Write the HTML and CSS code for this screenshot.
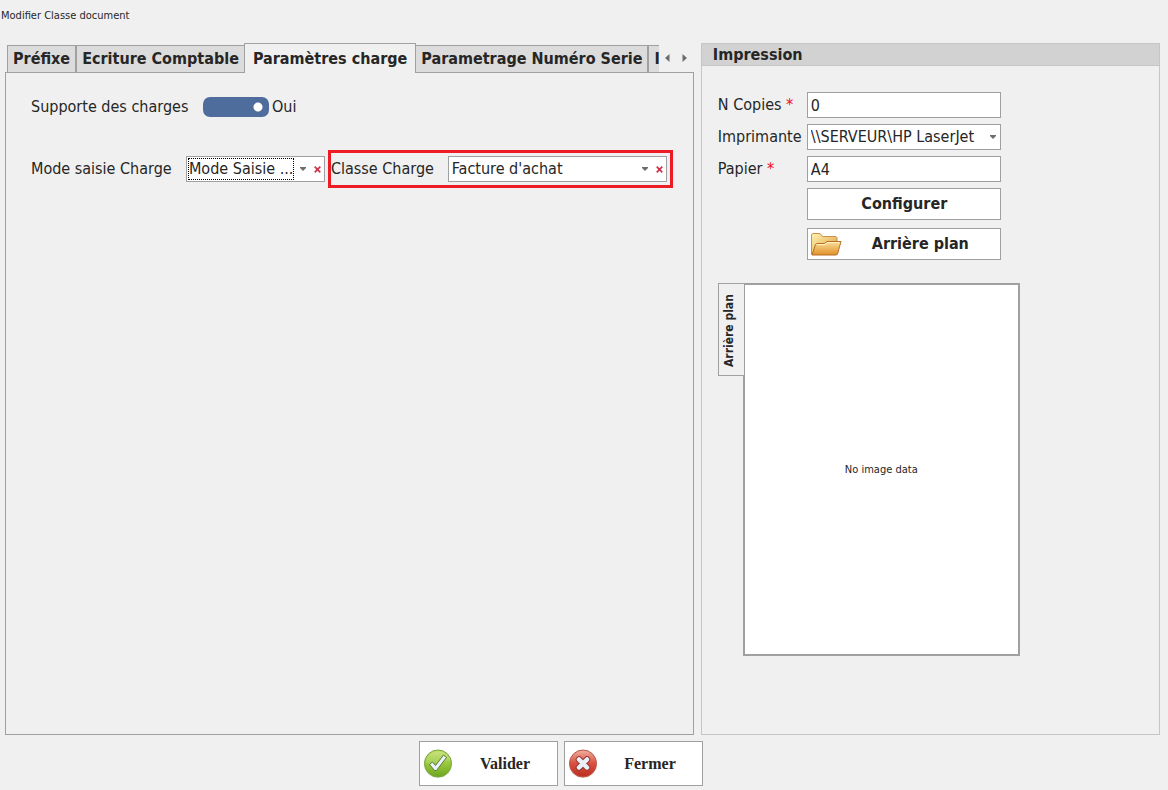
FILE: index.html
```html
<!DOCTYPE html>
<html lang="fr">
<head>
<meta charset="utf-8">
<meta name="viewport" content="width=device-width, initial-scale=1">
<title>Modifier Classe document</title>
<link rel="stylesheet" href="styles.css">
</head>
<body>
<header class="titlebar">Modifier Classe document</header>
<form class="window">
  <main class="columns">
    <section class="tabs">
      <div class="tabbar">
        <div class="tablist" role="tablist">
          <button type="button" class="tab" role="tab">Préfixe</button>
          <button type="button" class="tab" role="tab">Ecriture Comptable</button>
          <button type="button" class="tab tab-active" role="tab" aria-selected="true">Paramètres charge</button>
          <button type="button" class="tab" role="tab">Parametrage Numéro Serie</button>
          <button type="button" class="tab" role="tab">I</button>
        </div>
        <button type="button" class="scroll" aria-label="Précédent"><svg width="5" height="8" viewBox="0 0 5 8"><path d="M4.5 0V8L0 4Z" fill="#6d6d6d"/></svg></button>
        <button type="button" class="scroll" aria-label="Suivant"><svg width="5" height="8" viewBox="0 0 5 8"><path d="M.5 0V8L5 4Z" fill="#6d6d6d"/></svg></button>
      </div>
      <div class="panel" role="tabpanel">
        <div class="row">
          <label class="label-support" for="support">Supporte des charges</label>
          <input class="switch" type="checkbox" role="switch" id="support" checked>
          <span>Oui</span>
        </div>
        <div class="row row-mode">
          <label class="label-mode" for="mode">Mode saisie Charge</label>
          <div class="combo combo-mode">
            <select id="mode" class="select select-focus"><option>Mode Saisie ...</option></select>
            <svg class="caret" width="6" height="4" viewBox="0 0 6 4"><path d="M0 0H6V1L3 4L0 1Z" fill="#6d6d6d"/></svg>
            <button type="button" class="clear" aria-label="Effacer le mode"><svg width="7" height="7" viewBox="0 0 7 7"><path d="M.7 .7L6.3 6.3M6.3 .7L.7 6.3" stroke="#d0324a" stroke-width="1.7"/></svg></button>
          </div>
          <div class="highlight">
            <label class="label-class" for="classe">Classe Charge</label>
            <div class="combo combo-class">
              <select id="classe" class="select"><option>Facture d'achat</option></select>
              <svg class="caret" width="6" height="4" viewBox="0 0 6 4"><path d="M0 0H6V1L3 4L0 1Z" fill="#6d6d6d"/></svg>
              <button type="button" class="clear" aria-label="Effacer la classe"><svg width="7" height="7" viewBox="0 0 7 7"><path d="M.7 .7L6.3 6.3M6.3 .7L.7 6.3" stroke="#d0324a" stroke-width="1.7"/></svg></button>
            </div>
          </div>
        </div>
      </div>
    </section>
    <section class="group">
      <h2 class="group-title">Impression</h2>
      <div class="group-body">
        <div class="fields">
          <label for="copies">N Copies <span class="required">*</span></label>
          <input class="textbox" id="copies" type="text" value="0">
          <label for="printer">Imprimante</label>
          <div class="combo">
            <select id="printer" class="select"><option>\\SERVEUR\HP LaserJet</option></select>
            <svg class="caret caret-end" width="6" height="4" viewBox="0 0 6 4"><path d="M0 0H6V1L3 4L0 1Z" fill="#6d6d6d"/></svg>
          </div>
          <label for="paper">Papier <span class="required">*</span></label>
          <input class="textbox" id="paper" type="text" value="A4">
        </div>
        <div class="actions">
          <button type="button" class="button">Configurer</button>
          <button type="button" class="button">
            <svg width="32" height="24" viewBox="0 0 32 24">
              <defs>
                <linearGradient id="back" x1="0" y1="0" x2="1" y2="1"><stop offset="0" stop-color="#fff3b0"/><stop offset="1" stop-color="#dc9a3c"/></linearGradient>
                <linearGradient id="front" x1="0" y1="0" x2="0" y2="1"><stop offset="0" stop-color="#fbe09a"/><stop offset="1" stop-color="#e0902a"/></linearGradient>
              </defs>
              <path d="M.5 22.500V2.500L2 1.500H9L11.500 4.500H25L26 5.500V22.500Z" fill="url(#back)" stroke="#c9914c"/>
              <path d="M1 23L4.500 12.500L6 11.500H13.500L16 9.500H30L26.500 22L25.500 23Z" fill="url(#front)" stroke="#b97025"/>
              <path d="M5.500 12.600H14L16.500 10.600H28.500" fill="none" stroke="#fff2c4"/>
            </svg>
            <span class="button-text">Arrière plan</span>
          </button>
        </div>
        <div class="preview">
          <button type="button" class="side-tab">Arrière plan</button>
          <div class="image-box">No image data</div>
        </div>
      </div>
    </section>
  </main>
  <footer class="footer">
    <button type="submit" class="button button-large">
      <svg width="30" height="30" viewBox="0 0 30 30">
        <defs><linearGradient id="green" x1="0" y1="0" x2="0" y2="1"><stop offset="0" stop-color="#c3e06c"/><stop offset=".5" stop-color="#98c83c"/><stop offset="1" stop-color="#6ea51e"/></linearGradient></defs>
        <circle cx="15" cy="15" r="14" fill="#dde3d4"/>
        <circle cx="15" cy="14.500" r="13.500" fill="url(#green)" stroke="#7aa63c"/>
        <path d="M2.500 14C4 -1 26 -1 27.500 12C20 10 10 17 2.500 14Z" fill="#fff" opacity=".12"/>
        <path d="M6.500 15.500L9.500 13L12.500 16.500L20.500 6L23.500 8.500L13.500 21.500L11.500 21.500Z" fill="#eaf0fa" stroke="#5b7b32" stroke-linejoin="round"/>
      </svg>
      <span class="button-text">Valider</span>
    </button>
    <button type="button" class="button button-large">
      <svg width="30" height="30" viewBox="0 0 30 30">
        <defs><linearGradient id="red" x1="0" y1="0" x2="0" y2="1"><stop offset="0" stop-color="#efb0a0"/><stop offset=".5" stop-color="#d95040"/><stop offset="1" stop-color="#bd2c20"/></linearGradient></defs>
        <circle cx="15" cy="15" r="14" fill="#e8d9d6"/>
        <circle cx="15" cy="14.500" r="13.500" fill="url(#red)" stroke="#b8584a"/>
        <path d="M11 10.500L19 18.500M19 10.500L11 18.500" stroke="#96382f" stroke-width="6.500" stroke-linecap="round"/>
        <path d="M11 10.500L19 18.500M19 10.500L11 18.500" stroke="#eaf0fa" stroke-width="4.500" stroke-linecap="round"/>
      </svg>
      <span class="button-text">Fermer</span>
    </button>
  </footer>
</form>
</body>
</html>
```
FILE: styles.css
```css
* { box-sizing: border-box; }

body {
  margin: 0;
  min-height: 100vh;
  display: flex;
  flex-direction: column;
  background: #f0f0f0;
  color: #262626;
  font: 16px/20px "DejaVu Sans Condensed", "Noto Sans", sans-serif;
}

button, input, select { font: inherit; color: inherit; }
button { padding: 0; }
svg { display: block; flex: none; }

.titlebar {
  padding: 9px 1px 0;
  height: 43px;
  font-size: 11px;
  line-height: 14px;
}

.window {
  flex: 1;
  display: flex;
  flex-direction: column;
}

.columns {
  flex: 1;
  display: grid;
  grid-template-columns: 3fr 2fr;
  gap: 7px;
  padding: 0 8px 0 5px;
}

.tabs {
  min-width: 0;
  display: flex;
  flex-direction: column;
}

.tabbar {
  display: flex;
  align-items: center;
  height: 30px;
  margin-bottom: -1px;
  padding-left: 2px;
  z-index: 1;
}

.tablist {
  flex: 1;
  min-width: 0;
  height: 30px;
  display: flex;
  align-items: flex-end;
  overflow: hidden;
}

.tab {
  flex: none;
  height: 28px;
  padding: 0 5px;
  border: 1px solid #a0a0a0;
  background: #dcdcdc;
  font-weight: bold;
  white-space: nowrap;
}

.tab-active {
  height: 30px;
  margin: 0 -1px;
  padding: 0 8px;
  border-bottom: 0;
  background: #f0f0f0;
}

.scroll {
  width: 17px;
  height: 20px;
  display: grid;
  place-items: center;
  border: 0;
  background: none;
}

.scroll:last-child { margin-right: 1px; }

.panel {
  flex: 1;
  padding: 24px 20px 0 25px;
  border: 1px solid #a0a0a0;
}

.row { display: flex; align-items: center; }
.row-mode { margin-top: 33px; }
.label-support { width: 172px; }
.label-mode { width: 155px; }
.label-class { flex: 1; }

.switch {
  appearance: none;
  width: 66px;
  height: 20px;
  margin: 0 3px 0 0;
  border-radius: 7px;
  background: radial-gradient(circle at 55px 10px, #fff 4px, #4e6d9c 5px);
}

.combo {
  display: flex;
  align-items: center;
  height: 26px;
  padding: 1px;
  border: 1px solid #a0a0a0;
  background: #fff;
}

.combo-mode { width: 139px; }
.combo-class { width: 219px; }

.select {
  appearance: none;
  flex: 1;
  min-width: 0;
  height: 22px;
  padding: 0 2px;
  border: 0;
  border-radius: 0;
  background: none;
}

.select-focus {
  padding: 0;
  border: 1px dotted #000;
}

.caret { margin: 0 6px; }
.caret-end { margin: 0 3px; }

.clear {
  width: 11px;
  height: 20px;
  display: grid;
  place-items: center;
  border: 0;
  background: none;
}

.highlight {
  display: flex;
  align-items: center;
  width: 345px;
  height: 38px;
  margin-left: 3px;
  padding-right: 3px;
  border: 3px solid #ed1c24;
}

.group {
  display: flex;
  flex-direction: column;
  border: 1px solid #c6c6c6;
}

.group-title {
  margin: 0;
  padding: 1px 11px 0;
  border-bottom: 1px solid #c6c6c6;
  background: #d2d2d2;
  font-size: 16px;
}

.group-body { padding: 26px 16px 0; }

.fields {
  display: grid;
  grid-template-columns: 89px 194px;
  row-gap: 6px;
  align-items: center;
}

.required { color: #f00a28; }

.textbox {
  width: 100%;
  height: 26px;
  padding: 0 3px;
  border: 1px solid #a0a0a0;
  background: #fff;
}

.actions {
  display: grid;
  gap: 8px;
  width: 194px;
  margin: 6px 0 23px 89px;
}

.button {
  display: flex;
  align-items: center;
  justify-content: center;
  height: 32px;
  padding: 0 2px 0 3px;
  border: 1px solid #a0a0a0;
  background: #fff;
  font-weight: bold;
}

.button-text { flex: 1; text-align: center; }

.preview {
  display: flex;
  align-items: flex-start;
}

.side-tab {
  width: 27px;
  height: 93px;
  margin-right: -2px;
  padding: 0 0 3px 5px;
  border: 1px solid #a0a0a0;
  background: #f0f0f0;
  font-size: 12px;
  font-weight: bold;
  line-height: 16px;
  writing-mode: vertical-rl;
  rotate: 180deg;
}

.image-box {
  display: grid;
  place-items: center;
  width: 277px;
  height: 373px;
  border: 2px solid #a0a0a0;
  background: #fff;
  font-size: 11px;
}

.footer {
  display: flex;
  gap: 6px;
  padding: 6px 0 4px 419px;
}

.button-large {
  width: 139px;
  height: 45px;
  padding-right: 0;
  font-family: "Liberation Serif", serif;
}
```
